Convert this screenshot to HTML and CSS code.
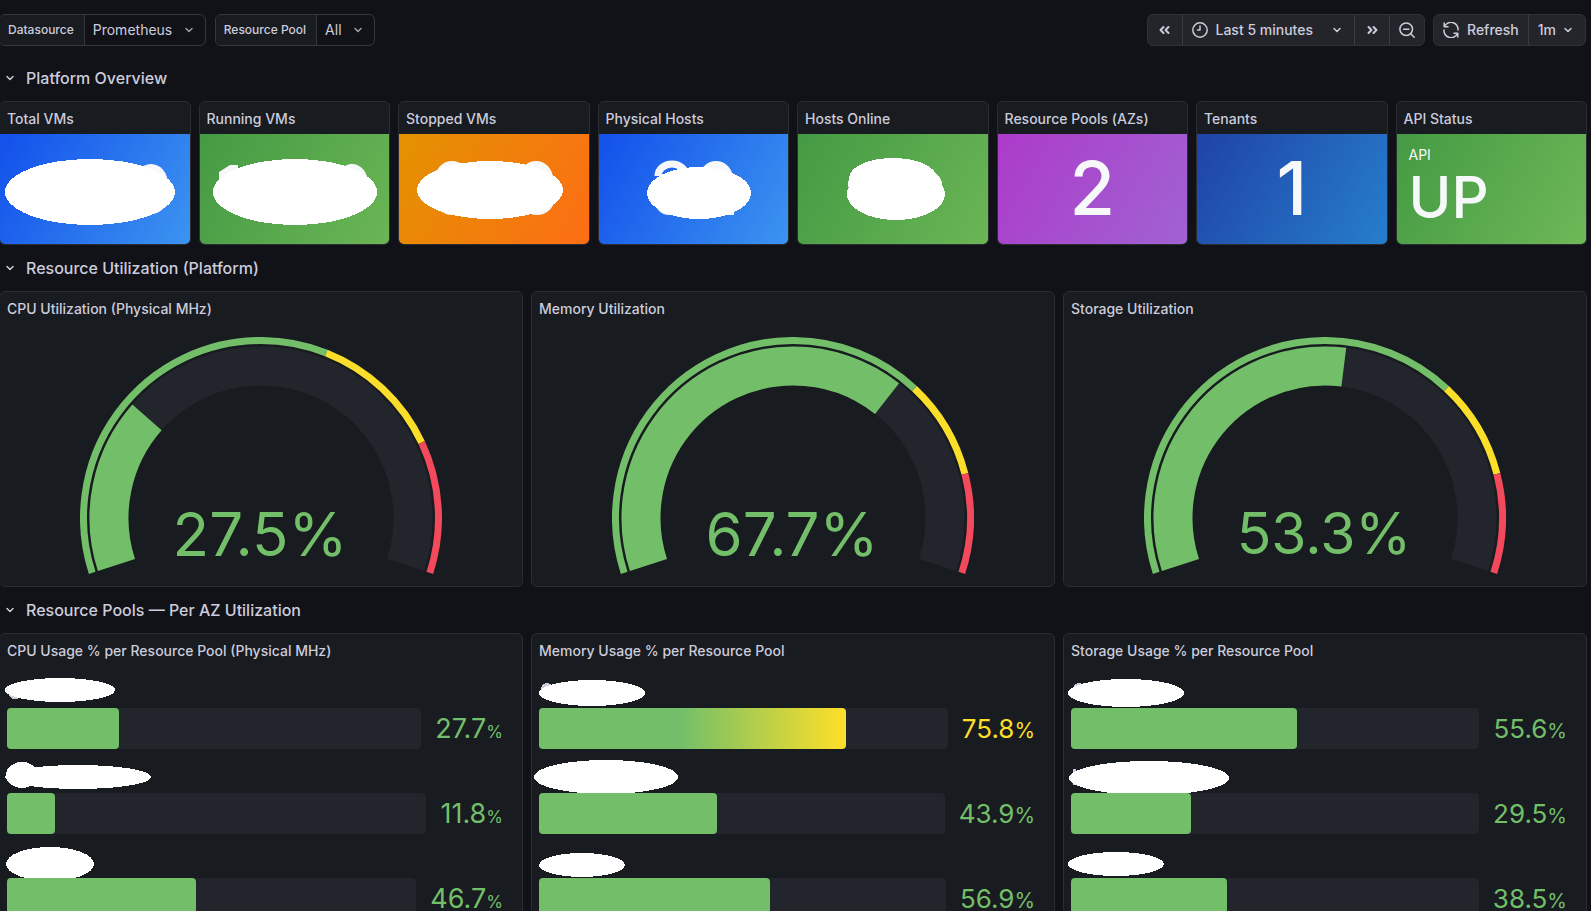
FILE: index.html
```html
<!doctype html>
<html lang="en">
<head>
<meta charset="utf-8">
<title>Platform Overview</title>
<link rel="stylesheet" href="styles.css">
</head>
<body>
	<!-- shared icons -->
	<svg class="sprite" aria-hidden="true">
		<symbol id="down" viewBox="0 0 16 16"><path d="M5 6.500l3 3 3-3"/></symbol>
		<symbol id="dleft" viewBox="0 0 16 16"><path stroke-width="2" d="M6.500 5l-3 3 3 3M11.500 5l-3 3 3 3"/></symbol>
		<symbol id="dright" viewBox="0 0 16 16"><path stroke-width="2" d="M4.500 5l3 3-3 3M9.500 5l3 3-3 3"/></symbol>
		<symbol id="clock" viewBox="0 0 16 16"><circle cx="8" cy="8" r="7.200"/><path d="M8 4v4H5.500"/></symbol>
		<symbol id="zoomout" viewBox="0 0 16 16"><circle cx="7.200" cy="7.200" r="6.300"/><path d="M4.500 7.200h5.400M11.700 11.700l3.500 3.500"/></symbol>
		<symbol id="sync" viewBox="0 0 16 16"><path d="M1.200 1v3.800H5M1.500 4.800A7 7 0 0 1 15 8M14.800 15v-3.800H11M14.500 11.200A7 7 0 0 1 1 8"/></symbol>
	</svg>

	<header class="controls">
		<div class="variable">
			<label for="datasource">Datasource</label>
			<select id="datasource"><option>Prometheus</option></select>
			<svg class="icon"><use href="#down"/></svg>
		</div>
		<div class="variable">
			<label for="pool">Resource Pool</label>
			<select id="pool"><option>All</option></select>
			<svg class="icon"><use href="#down"/></svg>
		</div>
		<div class="buttons time">
			<button type="button" aria-label="Back"><svg class="icon"><use href="#dleft"/></svg></button>
			<button type="button" class="range"><svg class="icon"><use href="#clock"/></svg><span>Last 5 minutes</span><svg class="icon"><use href="#down"/></svg></button>
			<button type="button" aria-label="Forward"><svg class="icon"><use href="#dright"/></svg></button>
			<button type="button" aria-label="Zoom out"><svg class="icon"><use href="#zoomout"/></svg></button>
		</div>
		<div class="buttons">
			<button type="button" class="refresh"><svg class="icon"><use href="#sync"/></svg><span>Refresh</span></button>
			<button type="button" class="interval"><span>1m</span><svg class="icon"><use href="#down"/></svg></button>
		</div>
	</header>

	<main>
		<h2><svg class="icon"><use href="#down"/></svg>Platform Overview</h2>
		<div class="row stats">
			<section class="panel">
				<h3>Total VMs</h3>
				<div class="stat blue">
					<svg class="mask"><g class="rest"><ellipse cx="151" cy="50" rx="17" ry="20"/><ellipse cx="151" cy="62" rx="17" ry="18"/></g><ellipse cx="90" cy="58" rx="85" ry="33"/></svg>
				</div>
			</section>
			<section class="panel">
				<h3>Running VMs</h3>
				<div class="stat green">
					<svg class="mask"><g class="rest"><path d="M19 38l11-7h8v19H19z"/><ellipse cx="152" cy="49" rx="16" ry="19"/></g><ellipse cx="95" cy="58" rx="82" ry="33"/></svg>
				</div>
			</section>
			<section class="panel">
				<h3>Stopped VMs</h3>
				<div class="stat orange">
					<svg class="mask"><g class="rest"><ellipse cx="53" cy="45" rx="17" ry="18"/><ellipse cx="53" cy="63" rx="17" ry="18"/><ellipse cx="137" cy="45" rx="17" ry="18"/><ellipse cx="138" cy="63" rx="18" ry="18"/></g><ellipse cx="91" cy="56" rx="73" ry="29"/></svg>
				</div>
			</section>
			<section class="panel">
				<h3>Physical Hosts</h3>
				<div class="stat blue">
					<svg class="mask"><g class="rest"><path class="ring" d="M59 42a14 12 0 0 1 28 0"/><ellipse cx="70" cy="67" rx="14" ry="14"/><ellipse cx="117" cy="45" rx="17" ry="18"/><path d="M112 70h23v11h-23z"/></g><ellipse cx="100" cy="59" rx="52" ry="26"/></svg>
				</div>
			</section>
			<section class="panel">
				<h3>Hosts Online</h3>
				<div class="stat green">
					<svg class="mask"><ellipse cx="95" cy="44" rx="44" ry="20"/><ellipse cx="97" cy="50" rx="47" ry="22"/><ellipse cx="98" cy="60" rx="49" ry="26"/></svg>
				</div>
			</section>
			<section class="panel">
				<h3>Resource Pools (AZs)</h3>
				<div class="stat purple"><span class="number">2</span></div>
			</section>
			<section class="panel">
				<h3>Tenants</h3>
				<div class="stat navy"><span class="number">1</span></div>
			</section>
			<section class="panel">
				<h3>API Status</h3>
				<div class="stat green named"><span class="name">API</span><span class="state">UP</span></div>
			</section>
		</div>

		<h2><svg class="icon"><use href="#down"/></svg>Resource Utilization (Platform)</h2>
		<div class="row thirds">
			<section class="panel">
				<h3>CPU Utilization (Physical MHz)</h3>
				<svg class="gauge" viewBox="0 0 362 238">
					<path class="limit ok" pathLength="100" stroke-dasharray="60 100" d="M12.190 235.850A177.500 177.500 0 1 1 349.810 235.850"/>
					<path class="limit warn" pathLength="100" stroke-dasharray="20 100" stroke-dashoffset="-60" d="M12.190 235.850A177.500 177.500 0 1 1 349.810 235.850"/>
					<path class="limit crit" pathLength="100" stroke-dasharray="20 100" stroke-dashoffset="-80" d="M12.190 235.850A177.500 177.500 0 1 1 349.810 235.850"/>
					<path class="dial" d="M36.440 227.970A152 152 0 1 1 325.560 227.970"/>
					<path class="dial ok" pathLength="100" stroke-dasharray="27.500 100" d="M36.440 227.970A152 152 0 1 1 325.560 227.970"/>
					<text x="180" y="219">27.5%</text>
				</svg>
			</section>
			<section class="panel">
				<h3>Memory Utilization</h3>
				<svg class="gauge" viewBox="0 0 362 238">
					<path class="limit ok" pathLength="100" stroke-dasharray="70 100" d="M12.190 235.850A177.500 177.500 0 1 1 349.810 235.850"/>
					<path class="limit warn" pathLength="100" stroke-dasharray="15 100" stroke-dashoffset="-70" d="M12.190 235.850A177.500 177.500 0 1 1 349.810 235.850"/>
					<path class="limit crit" pathLength="100" stroke-dasharray="15 100" stroke-dashoffset="-85" d="M12.190 235.850A177.500 177.500 0 1 1 349.810 235.850"/>
					<path class="dial" d="M36.440 227.970A152 152 0 1 1 325.560 227.970"/>
					<path class="dial ok" pathLength="100" stroke-dasharray="67.700 100" d="M36.440 227.970A152 152 0 1 1 325.560 227.970"/>
					<text x="180" y="219">67.7%</text>
				</svg>
			</section>
			<section class="panel storage">
				<h3>Storage Utilization</h3>
				<svg class="gauge" viewBox="0 0 362 238">
					<path class="limit ok" pathLength="100" stroke-dasharray="70 100" d="M12.190 235.850A177.500 177.500 0 1 1 349.810 235.850"/>
					<path class="limit warn" pathLength="100" stroke-dasharray="15 100" stroke-dashoffset="-70" d="M12.190 235.850A177.500 177.500 0 1 1 349.810 235.850"/>
					<path class="limit crit" pathLength="100" stroke-dasharray="15 100" stroke-dashoffset="-85" d="M12.190 235.850A177.500 177.500 0 1 1 349.810 235.850"/>
					<path class="dial" d="M36.440 227.970A152 152 0 1 1 325.560 227.970"/>
					<path class="dial ok" pathLength="100" stroke-dasharray="53.300 100" d="M36.440 227.970A152 152 0 1 1 325.560 227.970"/>
					<text x="180" y="217">53.3%</text>
				</svg>
			</section>
		</div>

		<h2><svg class="icon"><use href="#down"/></svg>Resource Pools — Per AZ Utilization</h2>
		<div class="row thirds">
			<section class="panel cpu">
				<h3>CPU Usage % per Resource Pool (Physical MHz)</h3>
				<div class="bars">
					<div class="pool">
						<svg class="mask"><ellipse class="trace" cx="8" cy="18" rx="6" ry="5"/><ellipse cx="53" cy="14" rx="55" ry="12"/></svg>
						<div class="bar"><i class="fill" style="--value:27.7"></i><i class="track"></i><span>27.7<small>%</small></span></div>
					</div>
					<div class="pool">
						<svg class="mask"><ellipse cx="15" cy="14" rx="16" ry="13"/><ellipse cx="71" cy="16" rx="73" ry="12"/></svg>
						<div class="bar"><i class="fill" style="--value:11.8"></i><i class="track"></i><span>11.8<small>%</small></span></div>
					</div>
					<div class="pool">
						<svg class="mask"><ellipse cx="43" cy="18" rx="44" ry="17"/></svg>
						<div class="bar"><i class="fill" style="--value:46.7"></i><i class="track"></i><span>46.7<small>%</small></span></div>
					</div>
				</div>
			</section>
			<section class="panel memory">
				<h3>Memory Usage % per Resource Pool</h3>
				<div class="bars">
					<div class="pool">
						<svg class="mask"><ellipse class="trace" cx="8" cy="13" rx="6" ry="6"/><ellipse cx="53" cy="17" rx="53" ry="13"/></svg>
						<div class="bar high"><i class="fill" style="--value:75.8"></i><i class="track"></i><span>75.8<small>%</small></span></div>
					</div>
					<div class="pool">
						<svg class="mask"><ellipse cx="67" cy="16" rx="72" ry="17"/></svg>
						<div class="bar"><i class="fill" style="--value:43.9"></i><i class="track"></i><span>43.9<small>%</small></span></div>
					</div>
					<div class="pool">
						<svg class="mask"><ellipse cx="43" cy="19" rx="43" ry="12"/></svg>
						<div class="bar"><i class="fill" style="--value:56.9"></i><i class="track"></i><span>56.9<small>%</small></span></div>
					</div>
				</div>
			</section>
			<section class="panel storage">
				<h3>Storage Usage % per Resource Pool</h3>
				<div class="bars">
					<div class="pool">
						<svg class="mask"><ellipse class="trace" cx="8" cy="13" rx="6" ry="6"/><ellipse cx="55" cy="17" rx="58" ry="14"/></svg>
						<div class="bar"><i class="fill" style="--value:55.6"></i><i class="track"></i><span>55.6<small>%</small></span></div>
					</div>
					<div class="pool">
						<svg class="mask"><path class="trace" d="M2 8h3v16H2z"/><ellipse cx="78" cy="17" rx="80" ry="17"/></svg>
						<div class="bar"><i class="fill" style="--value:29.5"></i><i class="track"></i><span>29.5<small>%</small></span></div>
					</div>
					<div class="pool">
						<svg class="mask"><ellipse cx="45" cy="18" rx="48" ry="12"/></svg>
						<div class="bar"><i class="fill" style="--value:38.5"></i><i class="track"></i><span>38.5<small>%</small></span></div>
					</div>
				</div>
			</section>
		</div>
	</main>
</body>
</html>
```

FILE: styles.css
```css
* {
	box-sizing: border-box;
}

html, body {
	height: 100%;
	margin: 0;
	overflow: hidden;
}

body {
	background: #111217;
	color: #ccccdc;
	font: 14px/22px Inter, sans-serif;
}

.sprite {
	position: absolute;
	width: 0;
	height: 0;
}

.icon {
	width: 16px;
	height: 16px;
	flex: none;
	fill: none;
	stroke: currentColor;
	stroke-width: 1.5;
	stroke-linecap: round;
	stroke-linejoin: round;
}

/* top controls */
.controls {
	display: flex;
	gap: 8px;
	height: 46px;
	padding-top: 14px;
	margin: 0 5px 0 -1px;
}

.variable {
	display: flex;
	align-items: center;
	border: 1px solid #35373d;
	border-radius: 6px;
	overflow: hidden;
	padding-right: 8px;
	margin-right: 1px;
}

.variable label {
	align-self: stretch;
	background: #181b1f;
	border-right: 1px solid #35373d;
	font-size: 12px;
	font-weight: 500;
	line-height: 30px;
	padding: 0 10px 0 8px;
}

.variable select {
	appearance: none;
	background: none;
	border: 0;
	color: inherit;
	font: inherit;
	padding: 0 8px;
}

.variable .icon {
	color: #9d9eab;
}

.buttons {
	display: flex;
	border: 1px solid #303137;
	border-radius: 6px;
	background: #24252b;
	overflow: hidden;
}

.time {
	margin-left: auto;
}

.buttons button {
	display: flex;
	align-items: center;
	gap: 8px;
	background: none;
	border: 0;
	border-left: 1px solid #3b3c43;
	color: inherit;
	font: inherit;
	font-weight: 500;
	padding: 0 9px;
}

.buttons button:first-child {
	border-left: 0;
}

.range span {
	padding-right: 8px;
}

.buttons .interval {
	gap: 4px;
}

/* rows */
main {
	padding-top: 17px;
	margin: 0 4px 0 -1px;
}

h2 {
	display: flex;
	align-items: center;
	gap: 8px;
	height: 30px;
	margin: 0;
	padding-left: 3px;
	font-size: 16px;
	font-weight: 500;
}

.row {
	display: grid;
	gap: 8px;
	padding: 8px 0;
}

.stats {
	grid-template-columns: repeat(8, 1fr);
	grid-auto-rows: 144px;
	height: 160px;
}

.thirds {
	grid-template-columns: repeat(3, 1fr);
	grid-auto-rows: 296px;
}

.panel {
	display: flex;
	flex-direction: column;
	background: #181b1f;
	border: 1px solid #2b2d32;
	border-radius: 6px;
	overflow: hidden;
	min-width: 0;
}

h3 {
	flex: none;
	height: 32px;
	margin: 0;
	padding: 0 7px;
	font-size: 14px;
	font-weight: 500;
	line-height: 34px;
	white-space: nowrap;
}

/* stat panels */
.stat {
	display: flex;
	flex: 1;
	align-items: center;
	justify-content: center;
	color: #f7f8fa;
}

.blue {
	background: linear-gradient(120deg, #1250eb, #409af0);
}

.green {
	background: linear-gradient(120deg, #449a43, #6eb857);
}

.orange {
	background: linear-gradient(120deg, #e39200, #ff6a17);
}

.purple {
	background: linear-gradient(120deg, #ac3bca, #a062d2);
}

.navy {
	background: linear-gradient(120deg, #1f43a5, #267ecd);
}

.number {
	font-size: 74px;
	font-weight: 500;
	line-height: 80px;
	padding-bottom: 2px;
}

.named {
	flex-direction: column;
	align-items: flex-start;
	padding: 0 0 5px 12px;
}

.name {
	font-size: 14px;
	line-height: 20px;
}

.state {
	font-size: 58px;
	font-weight: 500;
	line-height: 64px;
}

/* blanked-out values and names */
.mask {
	display: block;
	width: 100%;
	height: 100%;
	overflow: visible;
	fill: #fff;
	shape-rendering: crispEdges;
}

.rest {
	fill: #f7f8fa;
	shape-rendering: auto;
}

.ring {
	fill: none;
	stroke: #f7f8fa;
	stroke-width: 7;
}

.trace {
	fill: #ccccdc;
}

/* gauges */
.gauge {
	width: 362px;
	height: 238px;
	margin: 13px auto 0;
}

.limit, .dial {
	fill: none;
	stroke: #22252b;
}

.limit {
	stroke-width: 7;
}

.dial {
	stroke-width: 39;
}

.ok {
	stroke: #73bf69;
}

.warn {
	stroke: #fade2a;
}

.crit {
	stroke: #f2495c;
}

.gauge text {
	fill: #73bf69;
	font-size: 60px;
	text-anchor: middle;
}

.storage .gauge text {
	font-size: 57px;
}

/* bar gauges */
.bars {
	display: flex;
	flex-direction: column;
	gap: 12px;
	padding: 10px 8px 0 7px;
}

.pool .mask {
	position: relative;
	height: 32px;
}

.bar {
	display: flex;
	height: 41px;
	color: #73bf69;
}

.fill {
	width: calc(var(--value) * 0.8%);
	background: #73bf69;
	border-radius: 4px;
	z-index: 1;
}

.track {
	flex: 1;
	margin-left: -4px;
	background: #22252b;
	border-radius: 4px;
}

.bar span {
	padding: 0 11px 0 14px;
	font-size: 26px;
	line-height: 42px;
}

.bar small {
	font-size: 20px;
}

.cpu .bar span {
	font-size: 27px;
}

.cpu .bar small {
	font-size: 17px;
}

.memory .bar small {
	font-size: 21px;
}

.high {
	color: #fade2a;
}

.high .fill {
	background: linear-gradient(90deg, #73bf69 46%, #fade2a 98%);
}
```
